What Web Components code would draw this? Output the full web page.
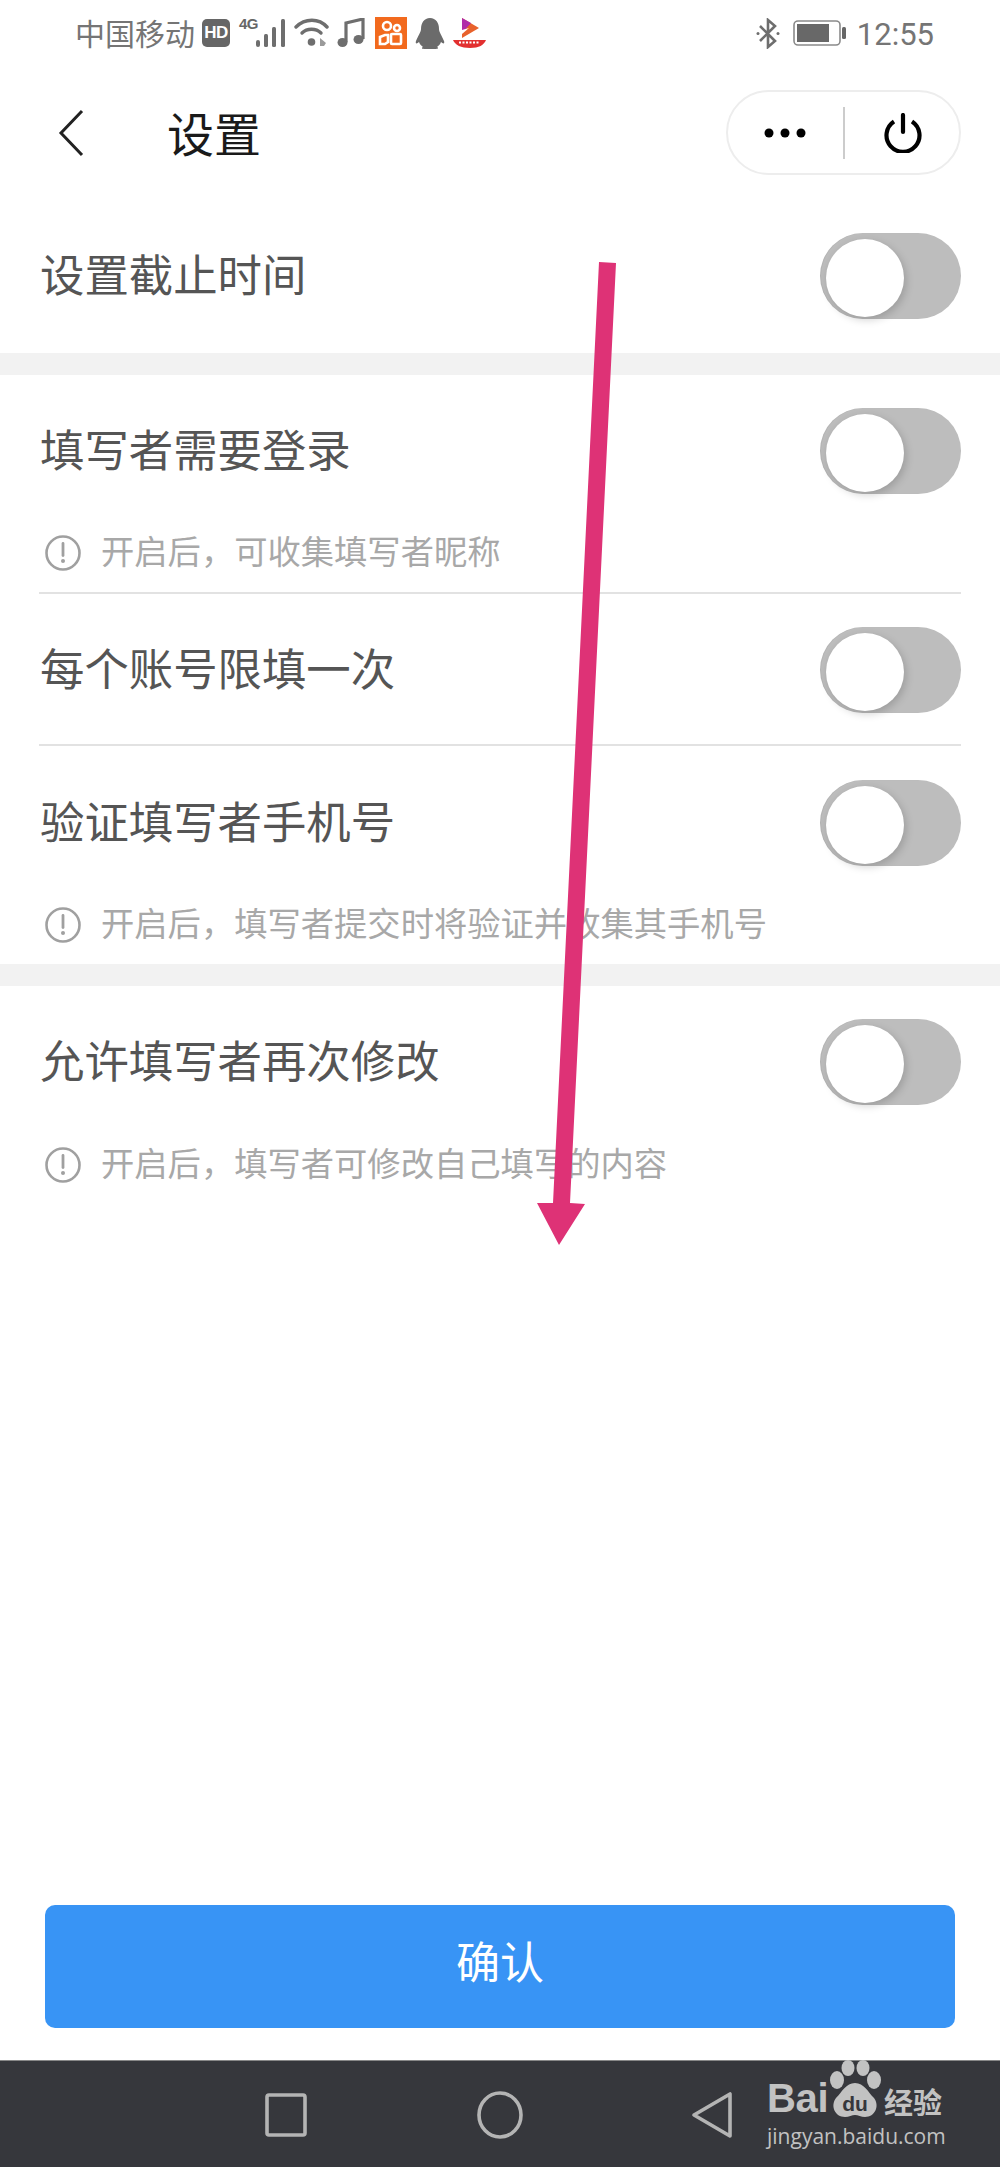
<!DOCTYPE html>
<html>
<head>
<meta charset="utf-8">
<title>设置</title>
<style>
html, body { margin: 0; padding: 0; background: #fff; }
body {
	width: 1000px; height: 2167px; position: relative; overflow: hidden;
	display: flex; flex-direction: column;
	font-family: Roboto, "Noto Sans CJK SC", sans-serif;
}
</style>
</head>
<body>
<status-bar></status-bar>
<nav-bar title="设置"></nav-bar>
<setting-row label="设置截止时间" style="--pt:58px;--pb:34px"></setting-row>
<gray-band></gray-band>
<setting-row label="填写者需要登录" hint="开启后，可收集填写者昵称" divider style="--pt:33px;--gap:39px;--pb:19px"></setting-row>
<setting-row label="每个账号限填一次" divider style="--pt:33px;--pb:31px"></setting-row>
<setting-row label="验证填写者手机号" hint="开启后，填写者提交时将验证并收集其手机号" style="--pt:34px;--gap:39px;--pb:19px"></setting-row>
<gray-band></gray-band>
<setting-row label="允许填写者再次修改" hint="开启后，填写者可修改自己填写的内容" style="--pt:33px;--gap:40px"></setting-row>
<div style="flex:1"></div>
<confirm-button>确认</confirm-button>
<system-keys></system-keys>
<draw-arrow></draw-arrow>
<baidu-mark></baidu-mark>

<script>
// small helper, every element just sets its shadow html once
function shadow(el, html) {
	el.attachShadow({mode: "open"}).innerHTML = html;
}

class StatusBar extends HTMLElement {
	connectedCallback() {
		shadow(this, `<style>
		:host { display: flex; align-items: center; height: 68px; box-sizing: border-box; padding: 0 66px 2px 75px; color: #757575; font-size: 30px; flex: none; }
		.t { line-height: 60px; font-family: "Noto Sans CJK SC", sans-serif; font-weight: 400; padding-bottom: 2px; }
		svg { display: block; flex: none; }
		.sp { flex: 1; }
		.time { font-family: Roboto, sans-serif; font-size: 31px; margin-left: 11px; position: relative; top: 1px; }
		.hd { width: 28px; height: 28px; background: #666; border-radius: 5px; color: #fff; font: 700 17px/28px "Liberation Sans", sans-serif; letter-spacing: -.5px; text-align: center; margin-left: 7px; flex: none; }
		.g4 { font: 700 15px/16px "Liberation Sans", sans-serif; color: #666; width: 17px; align-self: flex-start; margin: 16px 0 0 9px; white-space: nowrap; letter-spacing: -.5px; }
		.ks { width: 32px; height: 32px; background: #f26a1e; flex: none; margin-left: 10px; }
		</style>
		<span class="t">中国移动</span>
		<span class="hd">HD</span>
		<span class="g4">4G</span>
		<svg width="30" height="28" viewBox="0 0 30 28"><g fill="#6e6e6e"><rect x="0" y="21" width="4" height="7" rx="2"/><rect x="8" y="15" width="4" height="13" rx="1.5"/><rect x="16" y="8" width="4" height="20" rx="1.5"/><rect x="25" y="0" width="4" height="28" rx="1.5"/></g></svg>
		<svg width="36" height="30" viewBox="0 0 36 30" style="margin-left:8px"><g fill="none" stroke="#6e6e6e" stroke-width="3.4" stroke-linecap="round"><path d="M2 9C11 0 25 0 33 9"/><path d="M8 15C13 10 22 10 27 15"/></g><circle cx="17.500" cy="24" r="3.800" fill="#6e6e6e"/><path d="M26 28V20l6 5-2 3z" fill="#9a9a9a"/></svg>
		<svg width="28" height="30" viewBox="0 0 28 30" style="margin-left:7px"><path d="M9 24V5L26 1v20" fill="none" stroke="#6e6e6e" stroke-width="3.200"/><ellipse cx="5.500" cy="24.500" rx="5" ry="4.500" fill="#6e6e6e"/><ellipse cx="21.500" cy="21.500" rx="5" ry="4.500" fill="#6e6e6e"/></svg>
		<svg class="ks" viewBox="0 0 32 32"><g fill="none" stroke="#fff" stroke-width="2.600"><circle cx="12" cy="9" r="4"/><circle cx="22" cy="11" r="3"/><path d="M5 20l5-2h3v7l-3 2H5z"/><rect x="16" y="17" width="10" height="10" rx="1"/></g></svg>
		<svg width="30" height="31" viewBox="0 0 30 31" style="margin-left:8px"><path d="M15 0c6 0 9 5 9 11 0 3 3 7 5 12 1 3-1 3-3 1-1 3-3 4-4 5 2 1 1 2-2 2H10c-3 0-4-1-2-2-1-1-3-2-4-5-2 2-4 2-3-1 2-5 5-9 5-12C6 5 9 0 15 0z" fill="#6b6b6b"/></svg>
		<svg width="33" height="30" viewBox="0 0 33 30" style="margin-left:8px"><path d="M9 0l17 10-17 10z" fill="#e8622c"/><path d="M9 0l9 5-9 10z" fill="#b02ca8"/><path d="M9 12l7-2-7 6z" fill="#fff"/><path d="M0 22h33c-2 5-7 8-16 8S2 27 0 22z" fill="#e23030"/><path d="M6 24.500h21" stroke="#fff" stroke-width="2" stroke-dasharray="2 1.500"/></svg>
		<span class="sp"></span>
		<svg width="25" height="31" viewBox="0 0 25 31"><g fill="none" stroke="#6e6e6e" stroke-width="2.600"><path d="M4 8l15 15-7 6V2l7 6L4 23"/></g><circle cx="2" cy="15.500" r="1.500" fill="#6e6e6e"/><circle cx="22" cy="15.500" r="1.500" fill="#6e6e6e"/></svg>
		<svg width="53" height="26" viewBox="0 0 53 26" style="margin-left:12px"><rect x="1" y="1" width="46" height="24" rx="4" fill="none" stroke="#8a8a8a" stroke-width="1.600"/><rect x="4" y="4" width="32" height="18" fill="#686868"/><rect x="49" y="7" width="4" height="12" rx="1.500" fill="#666"/></svg>
		<span class="time">12:55</span>`);
	}
}

class NavBar extends HTMLElement {
	connectedCallback() {
		shadow(this, `<style>
		:host { display: flex; align-items: center; height: 107px; box-sizing: border-box; padding: 22px 39px 0 58px; flex: none; }
		svg { display: block; flex: none; }
		.title { font: 47px/60px "Noto Sans CJK SC", sans-serif; color: #1a1a1a; margin-left: 83px; flex: 1; position: relative; top: -1px; }
		.capsule { width: 235px; height: 85px; box-sizing: border-box; border: 2px solid #ededed; border-radius: 43px; display: flex; align-items: center; }
		.cell { flex: 1; display: flex; justify-content: center; align-items: center; }
		.line { width: 2px; height: 52px; background: #ccc; flex: none; }
		</style>
		<svg width="26" height="48" viewBox="0 0 26 48"><path d="M24 2L3 24l21 22" fill="none" stroke="#222" stroke-width="3"/></svg>
		<span class="title">${this.getAttribute("title")}</span>
		<div class="capsule">
			<div class="cell"><svg width="42" height="10" viewBox="0 0 42 10"><circle cx="5" cy="5" r="4.500"/><circle cx="21" cy="5" r="4.500"/><circle cx="37" cy="5" r="4.500"/></svg></div>
			<div class="line"></div>
			<div class="cell"><svg width="38" height="40" viewBox="0 0 38 40" style="margin-left:3px"><path d="M10 8.500a16.500 16.500 0 1 0 18 0" fill="none" stroke="#000" stroke-width="4.200"/><path d="M19 2v17" stroke="#000" stroke-width="4.200" stroke-linecap="round"/></svg></div>
		</div>`);
	}
}

class GrayBand extends HTMLElement {
	connectedCallback() {
		shadow(this, `<style>:host { display: block; height: 22px; background: #f2f2f2; flex: none; }</style>`);
	}
}

class ToggleSwitch extends HTMLElement {
	connectedCallback() {
		shadow(this, `<style>
		:host { display: block; width: 141px; height: 86px; flex: none; background: #bdbdbd; border-radius: 43px; box-sizing: border-box; padding: 6px 0 0 6px; box-shadow: inset 1px 0 1px rgba(0,0,0,.06); }
		i { display: block; width: 78px; height: 78px; background: #fff; border-radius: 50%; box-shadow: 2px 3px 8px rgba(0,0,0,.18); }
		</style><i></i>`);
	}
}

class SettingRow extends HTMLElement {
	connectedCallback() {
		const hint = this.getAttribute("hint");
		shadow(this, `<style>
		:host { display: block; margin: 0 39px 0 39px; padding: var(--pt, 32px) 0 var(--pb, 0) 0; flex: none; }
		:host([divider]) { border-bottom: 2px solid #e2e2e2; }
		.main { display: flex; align-items: center; justify-content: space-between; height: 86px; padding-left: 1px; }
		.label { font: 44.4px/60px "Noto Sans CJK SC", sans-serif; color: #555; padding-bottom: 6px; }
		.hint { display: flex; align-items: center; height: 40px; margin-top: var(--gap, 38px); padding-left: 6px; font: 33.3px/40px "Noto Sans CJK SC", sans-serif; color: #a8a8a8; }
		.hint span { position: relative; top: -3px; left: -1px; }
		.hint svg { flex: none; margin-right: 21px; display: block; }
		</style>
		<div class="main"><span class="label">${this.getAttribute("label")}</span><toggle-switch></toggle-switch></div>
		${hint ? `<div class="hint"><svg width="36" height="36" viewBox="0 0 36 36"><circle cx="18" cy="18" r="16.500" fill="none" stroke="#a0a0a0" stroke-width="2.600"/><path d="M18 8.500v12" stroke="#a0a0a0" stroke-width="2.800" stroke-linecap="round"/><circle cx="18" cy="26" r="2" fill="#a0a0a0"/></svg><span>${hint}</span></div>` : ""}`);
	}
}

class ConfirmButton extends HTMLElement {
	connectedCallback() {
		shadow(this, `<style>
		:host { display: flex; align-items: center; justify-content: center; height: 123px; box-sizing: border-box; padding-bottom: 14px; margin: 0 45px 32px 45px; background: #3894f5; border-radius: 10px; color: #fff; font: 44px/60px "Noto Sans CJK SC", sans-serif; flex: none; }
		</style><slot></slot>`);
	}
}

class SystemKeys extends HTMLElement {
	connectedCallback() {
		shadow(this, `<style>
		:host { display: block; height: 107px; background: #36373c; border-top: 1px solid #888; box-sizing: border-box; flex: none; }
		.keys { display: flex; align-items: center; height: 100%; padding: 2px 0 0 265px; box-sizing: border-box; }
		svg { display: block; flex: none; }
		</style>
		<div class="keys">
		<svg width="42" height="44" viewBox="0 0 42 44"><rect x="2" y="2" width="38" height="40" rx="2" fill="none" stroke="#b4b4b4" stroke-width="3.600"/></svg>
		<svg width="46" height="48" viewBox="0 0 46 48" style="margin-left:170px"><ellipse cx="23" cy="24" rx="21" ry="22" fill="none" stroke="#b4b4b4" stroke-width="3.600"/></svg>
		<svg width="42" height="48" viewBox="0 0 42 48" style="margin-left:168px"><path d="M39 3v42L3 24z" fill="none" stroke="#b4b4b4" stroke-width="3.600" stroke-linejoin="round"/></svg>
		</div>`);
	}
}

// the pink arrow somebody drew on the screenshot, lies over everything
class DrawArrow extends HTMLElement {
	connectedCallback() {
		shadow(this, `<style>:host { position: absolute; left: 0; top: 0; pointer-events: none; } svg { display: block; }</style>
		<svg width="1000" height="1300" viewBox="0 0 1000 1300"><path d="M599 262L616 263 570 1203 585 1204 559 1245 537 1203 553 1203z" fill="#de3276"/></svg>`);
	}
}

// jingyan watermark, bottom right over the key bar
class BaiduMark extends HTMLElement {
	connectedCallback() {
		shadow(this, `<style>
		:host { position: absolute; left: 767px; top: 2060px; width: 186px; height: 92px; color: #c2c2c2; font-family: "Liberation Sans", sans-serif; display: block; }
		.top { display: flex; align-items: flex-end; height: 58px; }
		.bai { font: 700 40px/38px "Liberation Sans", sans-serif; letter-spacing: -.3px; width: 61px; margin-bottom: 1px; }
		svg { display: block; flex: none; }
		.cn { font: 700 29px/34px "Noto Sans CJK SC", sans-serif; margin-left: 2px; }
		.url { font: 21px/26px "Open Sans", sans-serif; white-space: nowrap; margin-top: 5px; }
		</style>
		<div class="top"><span class="bai">Bai</span>
		<svg width="54" height="58" viewBox="0 0 54 58"><g fill="#c2c2c2"><ellipse cx="9" cy="20" rx="7" ry="9"/><ellipse cx="20" cy="8" rx="6.500" ry="8"/><ellipse cx="35" cy="8" rx="6.500" ry="8"/><ellipse cx="46" cy="20" rx="7" ry="9"/><path d="M27 23c9 0 13 9 19 15 6 8 1 19-9 19-4 0-7-2-10-2s-6 2-10 2C7 57 2 46 8 38c6-6 10-15 19-15z"/></g><text x="27" y="51" text-anchor="middle" font-family="Liberation Sans" font-weight="700" font-size="21" fill="#36373c">du</text></svg>
		<span class="cn">经验</span></div>
		<div class="url">jingyan.baidu.com</div>`);
	}
}

customElements.define("status-bar", StatusBar);
customElements.define("nav-bar", NavBar);
customElements.define("gray-band", GrayBand);
customElements.define("toggle-switch", ToggleSwitch);
customElements.define("setting-row", SettingRow);
customElements.define("confirm-button", ConfirmButton);
customElements.define("system-keys", SystemKeys);
customElements.define("draw-arrow", DrawArrow);
customElements.define("baidu-mark", BaiduMark);
</script>
</body>
</html>
